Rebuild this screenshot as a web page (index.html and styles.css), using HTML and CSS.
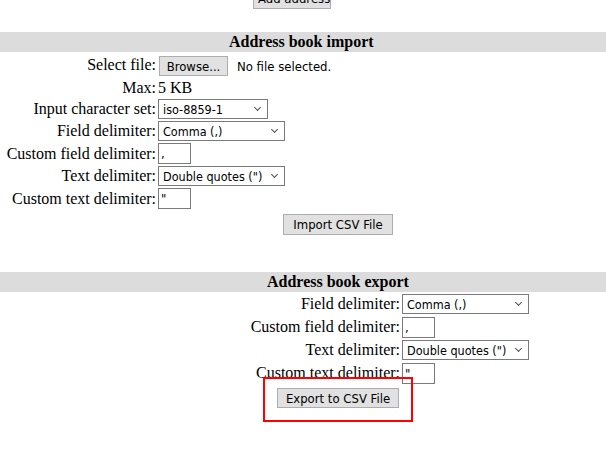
FILE: index.html
```html
<!DOCTYPE html>
<html lang="en">

<head>
    <meta charset="UTF-8">
    <title>Address book</title>
    <link rel="stylesheet" href="styles.css">
</head>

<body>

    <div class="add-row">
        <button type="button" class="add-btn">Add address</button>
    </div>

    <!-- import -->
    <div class="book import">
        <h2 class="bar">Address book import</h2>
        <form class="grid">
            <label>Select file:</label>
            <div class="file">
                <button type="button" class="browse">Browse...</button>
                <span class="file-name">No file selected.</span>
            </div>

            <label>Max:</label>
            <div class="max">5 KB</div>

            <label>Input character set:</label>
            <div class="pick short">
                <select>
                    <option>iso-8859-1</option>
                </select>
            </div>

            <label>Field delimiter:</label>
            <div class="pick">
                <select>
                    <option>Comma (,)</option>
                </select>
            </div>

            <label>Custom field delimiter:</label>
            <div><input type="text" class="tiny" value=","></div>

            <label>Text delimiter:</label>
            <div class="pick">
                <select>
                    <option>Double quotes (")</option>
                </select>
            </div>

            <label>Custom text delimiter:</label>
            <div><input type="text" class="tiny" value='"'></div>

            <div></div>
            <div class="submit"><button type="button" class="import-btn">Import CSV File</button></div>
        </form>
    </div>

    <!-- export -->
    <div class="book export">
        <h2 class="bar">Address book export</h2>
        <form class="grid">
            <label>Field delimiter:</label>
            <div class="pick">
                <select>
                    <option>Comma (,)</option>
                </select>
            </div>

            <label>Custom field delimiter:</label>
            <div><input type="text" class="tiny" value=","></div>

            <label>Text delimiter:</label>
            <div class="pick">
                <select>
                    <option>Double quotes (")</option>
                </select>
            </div>

            <label>Custom text delimiter:</label>
            <div><input type="text" class="tiny" value='"'></div>

            <div class="submit wide"><button type="button" class="export-btn">Export to CSV File</button></div>
        </form>
        <div class="highlight"></div>
    </div>

</body>

</html>
```

FILE: styles.css
```css
body {
    font-family: "Liberation Serif", "Times New Roman", serif;
    font-size: 16px;
    color: #000;
    background-color: #fff;
    margin: 0;
    padding: 0;
    min-height: 470px;
}

button,
select,
input {
    font-family: "DejaVu Sans Condensed", "DejaVu Sans", sans-serif;
    font-size: 13px;
    color: #000;
    margin: 0;
    box-sizing: border-box;
    white-space: nowrap;
}

button {
    height: 20px;
    padding: 0 4px;
    background-color: #e1e1e1;
    border: 1px solid #adadad;
    border-radius: 0;
}

.add-row {
    display: flex;
    height: 21px;
    margin-top: -12px;
    margin-bottom: 23px;
    padding-left: 253px;
}

.add-btn {
    width: 78px;
    height: 21px;
}

.book {
    position: relative;
}

.bar {
    margin: 0;
    height: 20px;
    line-height: 20px;
    font-size: 16px;
    font-weight: bold;
    background-color: #dcdcdc;
}

.import .bar {
    padding-left: 229px;
}

.export {
    margin-top: 37px;
    padding-bottom: 20px;
}

.export .bar {
    padding-left: 267px;
}

.grid {
    display: grid;
    column-gap: 2px;
    row-gap: 2px;
    margin-top: 2px;
    align-items: center;
}

.import .grid {
    grid-template-columns: 156px 1fr;
}

.export .grid {
    grid-template-columns: 400px 1fr;
    grid-auto-rows: 23px;
    row-gap: 0;
    align-items: start;
}

.grid label {
    text-align: right;
    line-height: 18px;
    white-space: nowrap;
}

.export .grid label {
    line-height: 20px;
}

.file {
    display: flex;
    align-items: center;
    height: 22px;
}

.browse {
    width: 69px;
    margin: 2px 0 0 1px;
}

.file-name {
    font-family: "DejaVu Sans Condensed", "DejaVu Sans", sans-serif;
    font-size: 13px;
    margin-left: 9px;
    margin-top: 2px;
}

.max {
    line-height: 19px;
}

.pick {
    position: relative;
    width: 127px;
    height: 20px;
}

.pick.short {
    width: 110px;
}

.pick select {
    -webkit-appearance: none;
    appearance: none;
    width: 100%;
    height: 20px;
    padding: 0 0 0 4px;
    font-size: 12.5px;
    background-color: #fff;
    border: 1px solid #7a7a7a;
    border-radius: 0;
}

/* little chevron in place of the native arrow */
.pick::after {
    content: "";
    position: absolute;
    right: 8px;
    top: 6px;
    width: 4px;
    height: 4px;
    border-right: 1px solid #505050;
    border-bottom: 1px solid #505050;
    transform: rotate(45deg);
    pointer-events: none;
}

.tiny {
    width: 33px;
    height: 21px;
    padding: 0 2px;
    border: 1px solid #7a7a7a;
    border-radius: 0;
}

.submit {
    margin-top: 3px;
}

.import-btn {
    width: 110px;
    height: 21px;
    margin-left: 125px;
}

.submit.wide {
    grid-column: 1 / 3;
    margin-top: 2px;
}

.export-btn {
    width: 122px;
    margin-left: 277px;
}

.highlight {
    position: absolute;
    left: 263px;
    top: 105px;
    width: 150px;
    height: 45px;
    border: 2px solid #f00;
    box-sizing: border-box;
}
```
